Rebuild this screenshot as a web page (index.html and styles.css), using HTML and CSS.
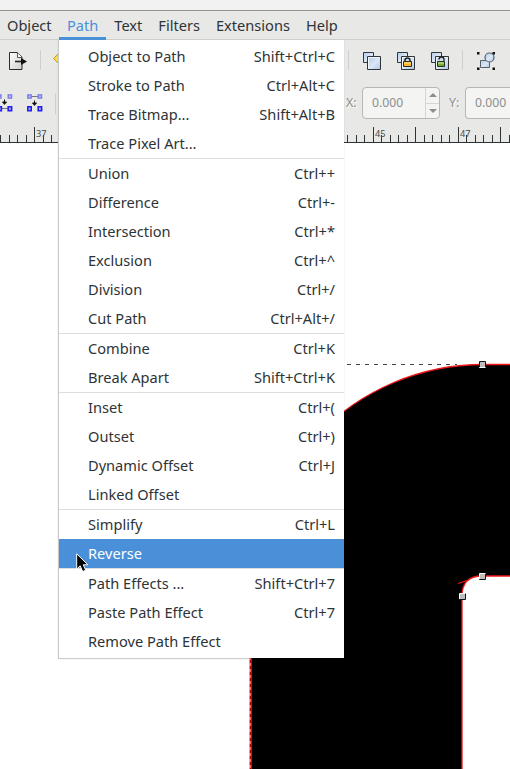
FILE: index.html
```
<!DOCTYPE html>
<html lang="en">
<head>
<meta charset="utf-8">
<title>Path menu</title>
<link rel="stylesheet" href="styles.css">
</head>
<body>
<div class="window">
  <div class="titlebar"></div>
  <nav class="menubar">
    <span class="tab object">Object</span><span class="tab active">Path</span><span class="tab">Text</span><span class="tab">Filters</span><span class="tab">Extensions</span><span class="tab">Help</span>
  </nav>
  <div class="toolbar">
    <svg width="510" height="44" viewBox="0 40 510 44">
      <defs>
        <linearGradient id="blue" x1="0" y1="0" x2="1" y2="1"><stop offset="0" stop-color="#b5cbea"/><stop offset=".55" stop-color="#dbe8f5"/><stop offset="1" stop-color="#a9c4e6"/></linearGradient>
        <linearGradient id="page" x1="0" y1="0" x2="1" y2="1"><stop offset="0" stop-color="#fff"/><stop offset="1" stop-color="#cfcfcb"/></linearGradient>
        <g id="squares"><path d="M.5.5h10v10H.5z" fill="url(#blue)" stroke="#303638"/><path d="M4.500 4.500h13v13h-13z" fill="url(#blue)" stroke="#303638"/><path d="M5.500 16.500v-11h11" fill="none" stroke="#f3f8ff"/></g>
      </defs>
      <path d="M9.500 52.500h8l4.500 4.500v12.500H9.500z" fill="url(#page)" stroke="#2b2b2b"/><path d="M17.500 52.500v5h4.500" fill="#fff" stroke="#555"/>
      <path d="M15 61.500h7" stroke="#222" stroke-width="1.600"/><path d="M21 58v7l6-3.500z" fill="#111"/>
      <path d="M40.500 50v20M348.500 50v20M462.500 50v20" stroke="#cfcfcd"/>
      <path d="M59 53l-5.500 5.500L59 64" fill="#f7dc5c" stroke="#c59b08"/>
      <use href="#squares" x="363" y="52"/><use href="#squares" x="397" y="52"/><use href="#squares" x="431" y="52"/>
      <path d="M405 62v-1.500a2.500 2.500 0 0 1 5 0V62" fill="none" stroke="#222" stroke-width="1.500"/><path d="M403.500 61.500h8v5h-8z" fill="#f6b52c" stroke="#302a20"/><path d="M404 63h7" stroke="#ffe48b"/>
      <path d="M439 59.500a2.500 2.500 0 0 1 5 0V62" fill="none" stroke="#222" stroke-width="1.300"/><path d="M437.500 61.500h7v5h-7z" fill="#74ac32" stroke="#273222"/><path d="M438 63h6" stroke="#d3efaa"/>
      <path d="M480.500 60.500h9v7h-9z" fill="url(#blue)" stroke="#56616a"/><circle cx="489.500" cy="57.500" r="4.500" fill="url(#blue)" stroke="#56616a" stroke-width="1.200"/>
      <path d="M477 52h2.500v2.500H477zM492.500 52h2.500v2.500h-2.500zM477 67.500h2.500V70H477zM492.500 67.500h2.500V70h-2.500z" fill="#111"/>
    </svg>
  </div>
  <div class="controls">
    <svg class="nodes" width="60" height="35" viewBox="0 84 60 35">
      <g><path d="M29.500 96.500h10" stroke="#777"/><path d="M27.800 94.800h3.400v3.400h-3.400zM38.200 94.800h3.400v3.400h-3.400z" fill="#bbbcf1" stroke="#7777f2" stroke-width="1.300"/><path d="M27.800 106.800h3.400v4h-3.400zM38.200 106.800h3.400v4h-3.400z" fill="#a9a9f4" stroke="#2020ef" stroke-width="1.600"/><path d="M34.500 100.500v5M32.500 103l2 2.200 2-2.200z" fill="#111" stroke="#111"/></g>
      <g transform="translate(-30 0)"><path d="M38.200 94.800h3.400v3.400h-3.400zM28 94.800h3v3.400h-3z" fill="#bbbcf1" stroke="#7777f2" stroke-width="1.300"/><path d="M29 108.500h10" stroke="#777"/><path d="M38.200 106.800h3.400v4h-3.400zM28 106.800h3.400v4H28z" fill="#a9a9f4" stroke="#2020ef" stroke-width="1.600"/><path d="M34.500 99.500v5M32.500 102l2 2.200 2-2.200z" fill="#111" stroke="#111"/></g>
      <path d="M55.500 93v21" stroke="#cfcfcd"/>
    </svg>
    <span class="coord">X:</span>
    <div class="spinner"><span>0.000</span><div class="arrows"><i class="up"></i><i class="down"></i></div></div>
    <span class="coord y">Y:</span>
    <div class="spinner clipped"><span>0.000</span></div>
  </div>
  <svg class="ruler" width="510" height="24" viewBox="0 119 510 24">
    <path d="M0 142.500h510" stroke="#2e3436"/>
    <path d="M.5 135v7M9.500 135v7M17.500 135v7M26.500 135v7M34.500 127v15M43.500 135v7M51.500 135v7M347.500 135v7M356.500 135v7M364.500 135v7M373.500 127v15M381.500 135v7M390.500 135v7M398.500 135v7M407.500 135v7M415.500 127v15M424.500 135v7M432.500 135v7M441.500 135v7M449.500 135v7M458.500 127v15M466.500 135v7M475.500 135v7M483.500 135v7M492.500 135v7M500.500 127v15M509.500 135v7" stroke="#2e3436"/>
    <text x="36" y="137">37</text><text x="375" y="137">45</text><text x="460" y="137">47</text>
  </svg>
  <svg class="canvas" width="510" height="626" viewBox="0 143 510 626">
    <path d="M250.500 780V600C250.500 470 355 364.500 483 364.500H520V576H482Q462 576 462 596V780z" fill="#000"/>
    <path d="M250.500 600C250.500 470 355 364.500 483 364.500H520M520 576H482Q462 576 462 596V780M458 583.500l9-3" fill="none" stroke="#f01818" stroke-width="1.300"/>
    <path d="M250.500 600v180" stroke="#ff6060" stroke-width="2"/><path d="M250.500 600v180" stroke="#b80000" stroke-width="1.500" stroke-dasharray="3 3"/>
    <path d="M347 364.500h110" stroke="#444" stroke-dasharray="4 5"/>
    <g fill="#bebebe" stroke="#111"><path d="M479.500 361.500h6v6h-6zM479.500 573.500h6v6h-6zM459.500 593.500h6v6h-6z"/></g>
    <path d="M479.500 368v-.5h6M479.500 579v-5.500h6M459.500 599v-5.500h6" fill="none" stroke="#fff"/>
  </svg>
</div>
<div class="menu">
  <div class="item"><span>Object to Path</span><span>Shift+Ctrl+C</span></div>
  <div class="item"><span>Stroke to Path</span><span>Ctrl+Alt+C</span></div>
  <div class="item"><span>Trace Bitmap...</span><span>Shift+Alt+B</span></div>
  <div class="item"><span>Trace Pixel Art...</span></div>
  <hr>
  <div class="item"><span>Union</span><span>Ctrl++</span></div>
  <div class="item"><span>Difference</span><span>Ctrl+-</span></div>
  <div class="item"><span>Intersection</span><span>Ctrl+*</span></div>
  <div class="item"><span>Exclusion</span><span>Ctrl+^</span></div>
  <div class="item"><span>Division</span><span>Ctrl+/</span></div>
  <div class="item"><span>Cut Path</span><span>Ctrl+Alt+/</span></div>
  <hr>
  <div class="item"><span>Combine</span><span>Ctrl+K</span></div>
  <div class="item"><span>Break Apart</span><span>Shift+Ctrl+K</span></div>
  <hr>
  <div class="item"><span>Inset</span><span>Ctrl+(</span></div>
  <div class="item"><span>Outset</span><span>Ctrl+)</span></div>
  <div class="item"><span>Dynamic Offset</span><span>Ctrl+J</span></div>
  <div class="item"><span>Linked Offset</span></div>
  <hr>
  <div class="item"><span>Simplify</span><span>Ctrl+L</span></div>
  <div class="item selected"><span>Reverse</span></div>
  <hr>
  <div class="item"><span>Path Effects ...</span><span>Shift+Ctrl+7</span></div>
  <div class="item"><span>Paste Path Effect</span><span>Ctrl+7</span></div>
  <div class="item"><span>Remove Path Effect</span></div>
</div>
<svg class="cursor" width="13" height="20" viewBox="0 0 13 20"><path d="M.7.8v15.300l3.500-3.300 2.500 5.700 3-1.300-2.500-5.400h4.700z" fill="#000" stroke="#fff"/></svg>
</body>
</html>
```
FILE: styles.css
```
* { box-sizing: border-box; }
body { margin: 0; background: #fff; color: #2e3436; font: 14.6px/29px "Noto Sans", sans-serif; overflow: hidden; }
svg { display: block; }
.window { width: 510px; height: 769px; overflow: hidden; background: #e8e8e7; }
.titlebar { height: 11px; background: #f2f2f2; border-bottom: 1px solid #92928e; }
.menubar { height: 29px; display: flex; border-bottom: 1px solid #cececc; }
.tab { padding: 0 8px; line-height: 29px; height: 29px; white-space: nowrap; }
.object { width: 59px; flex: none; padding-left: 7px; }
.active { color: #4a90d9; border-bottom: 3px solid #4a90d9; }
.toolbar { height: 44px; }
.controls { height: 35px; display: flex; align-items: flex-start; }
.nodes { flex: none; margin-right: 286px; }
.coord { width: 16px; flex: none; color: #8b8e8f; font-size: 12.500px; line-height: 38px; text-shadow: 1px 1px #fff; }
.y { margin-left: 9px; width: 16px; }
.spinner { width: 78px; height: 32px; margin-top: 3px; flex: none; display: flex; justify-content: space-between; border: 1px solid #b6b6b3; border-radius: 4px; background: #f4f4f2; color: #8b8e8f; }
.clipped { width: 45px; border-right: 0; border-radius: 4px 0 0 4px; }
.spinner span { padding-left: 9px; line-height: 30px; font-size: 12.200px; }
.arrows { width: 14px; border-left: 1px solid #d5d5d2; display: flex; flex-direction: column; }
.arrows i { flex: 1; display: flex; align-items: center; justify-content: center; }
.arrows i::after { content: ""; border: 4px solid transparent; }
.up { border-bottom: 1px solid #d5d5d2; }
.up::after { border-top: 0 !important; border-bottom-color: #8b8e8f !important; }
.down::after { border-bottom: 0 !important; border-top-color: #8b8e8f !important; }
.ruler text { font-size: 9.200px; fill: #454a4c; }
.canvas { background: #fff; }
.menu { position: absolute; left: 58px; top: 40px; width: 286px; height: 618px; padding: 2px 0; background: #fff; border-left: 1px solid #c8c8c8; box-shadow: 0 1px 1px #0003; }
.item { height: 29px; display: flex; justify-content: space-between; padding: 0 9px 0 29px; white-space: nowrap; }
.selected { background: #4a90d9; color: #fff; }
hr { height: 1px; margin: 0; border: 0; background: #dededc; }
.cursor { position: absolute; left: 76px; top: 553px; }
```
